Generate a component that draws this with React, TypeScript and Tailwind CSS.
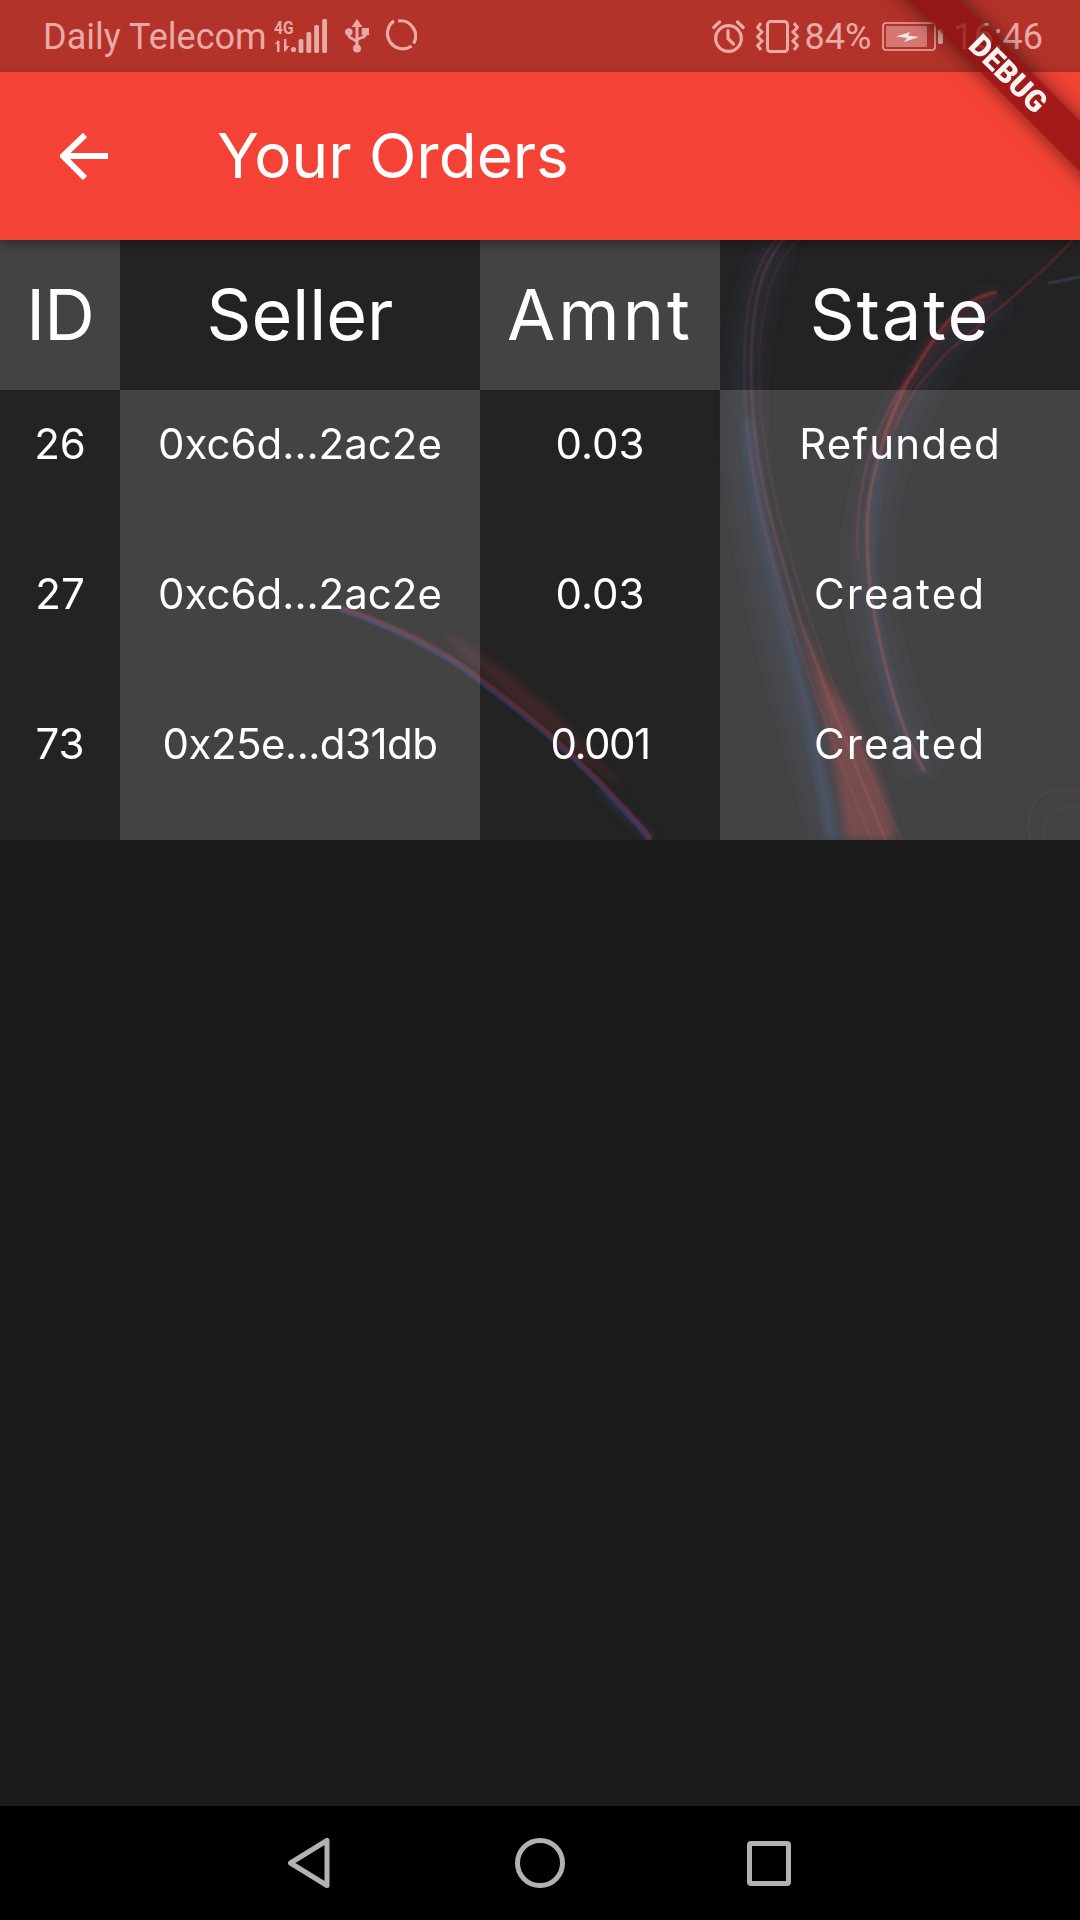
import React from "react";

const HEAD: [string, string][] = [
  ["ID", "tracking-[-1px]"],
  ["Seller", ""],
  ["Amnt", "tracking-[3px]"],
  ["State", "tracking-[2px]"],
];
const ROWS: [string, string][][] = [
  [["26", ""], ["0xc6d...2ac2e", ""], ["0.03", ""], ["Refunded", "tracking-[1.2px]"]],
  [["27", ""], ["0xc6d...2ac2e", ""], ["0.03", ""], ["Created", "tracking-[2px]"]],
  [["73", ""], ["0x25e...d31db", "tracking-[-0.5px]"], ["0.001", "tracking-[-1.5px]"], ["Created", "tracking-[2px]"]],
];

function Wisps() {
  const sweep = "M340 610C385 625 440 650 480 682C510 705 535 725 553 741C580 765 600 785 617 804C630 818 642 830 650 842";
  return (
    <svg className="absolute inset-0 w-full h-full" viewBox="0 240 1080 600" fill="none">
      <defs>
        <filter id="b1" x="-30%" y="-30%" width="160%" height="160%"><feGaussianBlur stdDeviation="0.9" /></filter>
        <filter id="b2" x="-30%" y="-30%" width="160%" height="160%"><feGaussianBlur stdDeviation="4" /></filter>
        <filter id="b3" x="-30%" y="-30%" width="160%" height="160%"><feGaussianBlur stdDeviation="12" /></filter>
      </defs>
      <g filter="url(#b3)">
        <path d="M780 240C745 300 738 400 748 480C760 580 800 720 835 840" stroke="#44507c" strokeWidth="20" opacity=".28" />
        <path d="M1000 300C930 350 880 430 868 540C864 620 890 700 925 770" stroke="#4a4f80" strokeWidth="28" opacity=".2" />
      </g>
      <g filter="url(#b2)">
        <path d="M748 420C754 500 775 580 803 690C815 740 826 800 832 840" stroke="#415a96" strokeWidth="7" opacity=".38" />
        <path d="M796 610C820 690 838 770 846 840L896 840C886 790 860 725 826 680Z" fill="#a83c3c" opacity=".45" />
        <path d="M880 455C868 520 866 580 880 650C888 690 900 730 925 772" stroke="#3f4d88" strokeWidth="7" opacity=".28" />
        <path d="M996 294C950 310 905 370 885 440" stroke="#a03030" strokeWidth="6" opacity=".38" />
        <path d="M600 790C620 810 640 825 652 840" stroke="#3f4d88" strokeWidth="5" opacity=".4" />
        <path d="M440 632C490 650 565 715 625 790C565 745 495 690 440 632Z" fill="#8c2f33" opacity=".26" />
      </g>
      <g filter="url(#b1)">
        <path d="M785 238C760 265 748 310 752 400C756 470 770 520 800 620C830 700 860 780 886 840" stroke="#b04a50" strokeWidth="1.5" opacity=".5" />
        <path d="M778 238C752 265 741 315 745 400C749 470 762 530 792 625C820 710 850 790 872 840" stroke="#a84452" strokeWidth="1.3" opacity=".42" />
        <path d="M800 238C770 265 756 315 760 400C764 460 778 520 810 620C842 710 875 790 902 840" stroke="#8a3c50" strokeWidth="1.2" opacity=".38" />
        <path d="M1073 240C1030 285 985 320 950 350C925 375 905 400 895 430" stroke="#b83a38" strokeWidth="1.6" opacity=".5" />
        <path d="M997 292C970 296 950 315 930 345C910 375 890 410 878 460C866 500 866 530 868 560C870 600 878 640 892 690C900 720 912 750 925 772" stroke="#c84238" strokeWidth="2.4" opacity=".5" />
        <path d="M918 368C900 385 880 420 868 460C858 500 856 530 858 560" stroke="#b84060" strokeWidth="1.8" opacity=".36" />
        <path d="M1048 283C1060 281 1070 279 1080 277" stroke="#5c6ca0" strokeWidth="1.4" opacity=".55" />
        <path d="M1030 840C1024 800 1040 785 1080 790" stroke="#8a3c3c" strokeWidth="1.3" opacity=".25" />
        <path d="M1045 840C1040 815 1055 805 1080 808" stroke="#6c4060" strokeWidth="1.2" opacity=".22" />
        <path d={sweep} stroke="#3f4d94" strokeWidth="2.6" opacity=".6" />
        <path d={sweep} stroke="#b03c44" strokeWidth="2.4" opacity=".5" transform="translate(1.5 -3)" />
      </g>
    </svg>
  );
}

function UsbIcon() {
  return (
    <svg className="w-[24px] h-[34px]" viewBox="0 0 24 34" fill="none">
      <path d="M12 0L17.5 8H6.5Z" fill="currentColor" />
      <path d="M12 6V28" stroke="currentColor" strokeWidth="3" />
      <circle cx="12" cy="29.5" r="4" fill="currentColor" />
      <circle cx="3.8" cy="13" r="3.8" fill="currentColor" />
      <rect x="16.8" y="9" width="7.2" height="7.2" fill="currentColor" />
      <path d="M3.8 14V16.5C3.8 20 12 20 12 24M20.4 14V16C20.4 19 12 18.5 12 22" stroke="currentColor" strokeWidth="2.8" />
    </svg>
  );
}

function SignalIcon() {
  return (
    <svg className="w-[53px] h-[34px] overflow-visible" viewBox="0 0 53 34">
      <text x="0" y="15" fontFamily="Roboto" fontWeight="700" fontSize="19" fill="currentColor" transform="scale(.82 1)">4G</text>
      <path d="M3 22H5.5V33H3ZM0.5 25.5L4 21 5 24Z" fill="currentColor" />
      <path d="M10 20H12.4V27H15.5L10.8 33 10 32Z" fill="currentColor" />
      <circle cx="19.5" cy="30.5" r="2.6" fill="currentColor" />
      <rect x="24.6" y="20" width="4.8" height="14" rx="1.6" fill="currentColor" />
      <rect x="32.4" y="13" width="4.8" height="21" rx="1.6" fill="currentColor" />
      <rect x="40.2" y="6" width="4.8" height="28" rx="1.6" fill="currentColor" />
      <rect x="48.2" y="0" width="4.8" height="34" rx="1.6" fill="currentColor" />
    </svg>
  );
}

function Spinner() {
  return (
    <svg className="w-[34px] h-[34px]" viewBox="0 0 34 34" fill="none" stroke="currentColor" strokeWidth="3.2">
      <path d="M15 2A15.2 15.2 0 0 1 30.6 24.5" />
      <path d="M28.6 27A15.2 15.2 0 0 1 11 1.9" />
    </svg>
  );
}

function AlarmIcon() {
  return (
    <svg className="w-[33px] h-[33px]" viewBox="0 0 33 33" fill="none" stroke="currentColor" strokeWidth="3.2">
      <circle cx="16.5" cy="18.5" r="12.8" />
      <path d="M16 10.5V18.5L21.5 24" strokeLinecap="round" />
      <path d="M1.8 7.5L7.5 2M31.2 7.5L25.5 2" strokeLinecap="round" />
    </svg>
  );
}

function VibrateIcon() {
  return (
    <svg className="w-[43px] h-[33px]" viewBox="0 0 43 33" fill="none" stroke="currentColor">
      <rect x="11.5" y="1.6" width="20" height="30" rx="3" strokeWidth="3" />
      <path d="M5 3L1.5 7.5L6 12L1.5 16.5L6 21L1.5 25.5L5 30" strokeWidth="3" />
      <path d="M38 3L41.5 7.5L37 12L41.5 16.5L37 21L41.5 25.5L38 30" strokeWidth="3" />
    </svg>
  );
}

function BatteryIcon() {
  return (
    <svg className="w-[61px] h-[29px]" viewBox="0 0 61 29" fill="none">
      <rect x="1" y="1" width="52" height="27" rx="3" stroke="currentColor" strokeWidth="1.6" />
      <rect x="4" y="4" width="41" height="21" rx="1" fill="currentColor" opacity=".6" />
      <rect x="56" y="7" width="5" height="15" rx="1.5" fill="currentColor" />
      <path d="M14 14.5L28 10L26 13.5L37 15L22 20L25 16Z" fill="#f7e3e1" />
    </svg>
  );
}

export default function App() {
  return (
    <div className="relative w-[1080px] h-[1920px] overflow-hidden flex flex-col bg-[#1b1b1b] font-['Inter',sans-serif] text-white">
      <div className="h-[72px] shrink-0 bg-[#b3322a] flex items-center justify-between pl-[43px] pr-[37px] text-[#e9a9a4] font-['Roboto',sans-serif] text-[36px] leading-none">
        <div className="flex items-center">
          <span className="relative top-[1px]">Daily Telecom</span>
          <span className="ml-[7px]"><SignalIcon /></span>
          <span className="ml-[18px]"><UsbIcon /></span>
          <span className="ml-[14px]"><Spinner /></span>
        </div>
        <div className="flex items-center">
          <AlarmIcon />
          <span className="ml-[11px]"><VibrateIcon /></span>
          <span className="relative top-[1px] ml-[6px]">84%</span>
          <span className="ml-[11px]"><BatteryIcon /></span>
          <span className="relative top-[1px] ml-[10px]">16:46</span>
        </div>
      </div>

      <header className="relative z-10 h-[168px] shrink-0 bg-[#f44336] flex items-center shadow-[0_4px_10px_rgba(0,0,0,0.35)]">
        <svg className="ml-[60px] w-[48px] h-[48px]" viewBox="0 0 48 48" fill="none" stroke="white" strokeWidth="6">
          <path d="M48 24H4M25 3L3 24L25 46" />
        </svg>
        <h1 className="ml-[109px] text-[62px] font-normal leading-none">Your Orders</h1>
      </header>

      <main className="relative h-[600px] shrink-0 bg-[#232324]">
        <Wisps />
        <div className="relative grid grid-cols-[120px_360px_240px_360px]">
          {HEAD.map(([h, t], i) => (
            <div key={h} className={`h-[150px] flex items-center justify-center text-[70px] leading-none ${i % 2 === 0 ? "bg-white/15" : ""}`}>
              <span className={t}>{h}</span>
            </div>
          ))}
          {ROWS.map((r, ri) =>
            r.map(([c, t], i) => (
              <div key={ri + "-" + i} className={`h-[150px] flex justify-center pt-[32px] text-[42px] leading-[44px] ${i % 2 === 1 ? "bg-white/15" : ""}`}>
                <span className={t}>{c}</span>
              </div>
            ))
          )}
        </div>
      </main>

      <div className="flex-1" />

      <nav className="relative h-[114px] shrink-0 bg-black flex items-center text-[#b2b2b2]">
        <svg className="ml-[286px] w-[46px] h-[54px]" viewBox="0 0 46 54" fill="none" stroke="currentColor" strokeWidth="5" strokeLinejoin="round">
          <path d="M41 4.5V49.5L4.5 27Z" />
        </svg>
        <svg className="ml-[183px] w-[50px] h-[50px]" viewBox="0 0 50 50" fill="none" stroke="currentColor" strokeWidth="5">
          <circle cx="25" cy="25" r="22.5" />
        </svg>
        <svg className="ml-[182px] w-[44px] h-[45px]" viewBox="0 0 44 45" fill="none" stroke="currentColor" strokeWidth="5" strokeLinejoin="round">
          <rect x="2.5" y="2.5" width="39" height="40" rx="1.5" />
        </svg>
      </nav>

      <div className="absolute z-20 left-[808px] top-[56px] w-[400px] h-[36px] rotate-45 bg-[rgba(135,14,14,0.76)] shadow-[0_0_20px_rgba(0,0,0,0.55)] flex items-center justify-center font-['Roboto',sans-serif] font-black text-[30px] leading-none text-white/95">
        DEBUG
      </div>
    </div>
  );
}
